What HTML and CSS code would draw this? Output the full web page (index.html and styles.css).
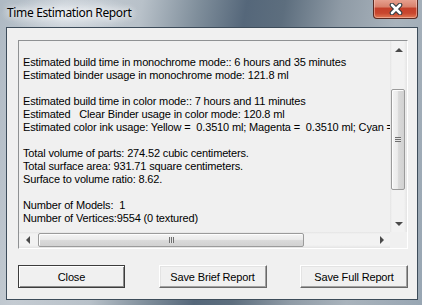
FILE: index.html
```html
<!DOCTYPE html>
<html>
<head>
<meta charset="utf-8">
<link rel="stylesheet" href="styles.css">
</head>
<body>
<div class="window">
  <div class="titlebar">
    <span class="title">Time Estimation Report</span>
    <button class="close-btn" aria-label="Close">
      <svg width="14" height="12" viewBox="0 0 14 12">
        <path d="M3 2 L11 10 M11 2 L3 10" stroke="#2f3a40" stroke-width="4.6" stroke-linecap="round" fill="none"/>
        <path d="M3 2 L11 10 M11 2 L3 10" stroke="#ffffff" stroke-width="2.6" stroke-linecap="round" fill="none"/>
      </svg>
    </button>
  </div>
  <div class="client">
    <div class="report">
      <div class="report-text">
        <div class="line"> </div>
        <div class="line">Estimated build time in monochrome mode:: 6 hours and 35 minutes</div>
        <div class="line">Estimated binder usage in monochrome mode: 121.8 ml</div>
        <div class="line"> </div>
        <div class="line">Estimated build time in color mode:: 7 hours and 11 minutes</div>
        <div class="line">Estimated   Clear Binder usage in color mode: 120.8 ml</div>
        <div class="line">Estimated color ink usage: Yellow =  0.3510 ml; Magenta =  0.3510 ml; Cyan =  0.3510 ml; Black =  0.3510 ml</div>
        <div class="line"> </div>
        <div class="line">Total volume of parts: 274.52 cubic centimeters.</div>
        <div class="line">Total surface area: 931.71 square centimeters.</div>
        <div class="line">Surface to volume ratio: 8.62.</div>
        <div class="line"> </div>
        <div class="line">Number of Models:  1</div>
        <div class="line">Number of Vertices:9554 (0 textured)</div>
      </div>
      <div class="vscroll">
        <div class="sb-btn"><span class="arr arr-up"></span></div>
        <div class="vtrack">
          <div class="vthumb"><span class="grip-v"></span></div>
        </div>
        <div class="sb-btn"><span class="arr arr-down"></span></div>
      </div>
      <div class="hscroll">
        <div class="sb-btn-h"><span class="arr arr-left"></span></div>
        <div class="htrack">
          <div class="hthumb"><span class="grip-h"></span></div>
        </div>
        <div class="sb-btn-h"><span class="arr arr-right"></span></div>
      </div>
      <div class="corner"></div>
    </div>
    <div class="buttons">
      <button class="btn btn-default">Close</button>
      <button class="btn btn-wide">Save Brief Report</button>
      <button class="btn btn-wide">Save Full Report</button>
    </div>
  </div>
</div>
</body>
</html>
```
FILE: styles.css
```css
html, body {
  margin: 0;
  padding: 0;
}
body {
  width: 422px;
  height: 305px;
  overflow: hidden;
  background:
    radial-gradient(ellipse 70px 18px at 70px 14px, rgba(235,240,245,0.85), rgba(235,240,245,0) 100%),
    linear-gradient(100deg, #aeb9c3 0%, #c4cbd2 14%, #b8c1c9 30%, #7f8e9b 42%, #55677a 52%, #5d6e7e 60%, #8f9ba6 72%, #a9b3bc 84%, #98a6b3 100%);
  font-family: "Liberation Sans", Arial, sans-serif;
}
.window {
  display: flex;
  flex-direction: column;
  height: 305px;
}
.titlebar {
  height: 27px;
  display: flex;
  align-items: flex-start;
  padding: 0 4px 0 7px;
  box-sizing: border-box;
}
.title {
  margin-top: 5px;
  font-family: "Noto Sans", "Open Sans", sans-serif;
  font-size: 12px;
  letter-spacing: -0.35px;
  line-height: 16px;
  color: #000;
  text-shadow: 0 0 6px rgba(255,255,255,0.9), 0 0 10px rgba(255,255,255,0.8);
}
.close-btn {
  margin-left: auto;
  margin-top: -1px;
  width: 45px;
  height: 20px;
  padding: 0;
  border: 1px solid #5a2a22;
  border-top: none;
  border-radius: 0 0 4px 4px;
  background: linear-gradient(to bottom, #e8a493 0%, #d9826d 40%, #c4402a 50%, #c9472f 75%, #e07a55 100%);
  box-shadow: inset 0 0 0 1px rgba(255,220,210,0.45);
  display: flex;
  align-items: center;
  justify-content: center;
}
.close-btn svg {
  display: block;
}
.client {
  flex: 1;
  margin: 0 4px 5px 6px;
  border: 1px solid #3d4c5a;
  background: #f0f0f0;
  padding: 12px 9px 11px 11px;
  display: flex;
  flex-direction: column;
  gap: 16px;
}
.report {
  height: 209px;
  box-sizing: border-box;
  border: 1px solid;
  border-color: #8f9193 #ffffff #ffffff #8f9193;
  display: grid;
  grid-template-columns: 371px 17px;
  grid-template-rows: 191px 16px;
  background: #f0f0f0;
}
.report-text {
  overflow: hidden;
  padding: 2px 0 0 4px;
  font-size: 11px;
  line-height: 13px;
  letter-spacing: -0.15px;
  color: #000;
}
.line {
  height: 13px;
  white-space: pre;
}
.vscroll {
  display: flex;
  flex-direction: column;
  background: linear-gradient(to right, #e4e4e4 0, #f2f2f2 2px, #f2f2f2 14px, #e4e4e4 17px);
}
.sb-btn {
  height: 17px;
  display: flex;
  align-items: center;
  justify-content: center;
}
.sb-btn-h {
  width: 17px;
  display: flex;
  align-items: center;
  justify-content: center;
}
.vtrack {
  flex: 1;
  padding-top: 31px;
  padding-left: 1px;
}
.vthumb {
  width: 14px;
  height: 101px;
  box-sizing: border-box;
  border: 1px solid #9b9b9b;
  border-radius: 2px;
  background: linear-gradient(to right, #f4f4f4 0%, #ebebeb 45%, #d9d9d9 55%, #d2d2d2 100%);
  box-shadow: inset 1px 1px 0 #fdfdfd;
  display: flex;
  align-items: center;
  justify-content: center;
}
.grip-v {
  width: 6px;
  height: 5px;
  background: repeating-linear-gradient(to bottom, #6f6f6f 0, #6f6f6f 1px, #e6e6e6 1px, #e6e6e6 2px);
}
.hscroll {
  display: flex;
  background: linear-gradient(to bottom, #e4e4e4 0, #f2f2f2 2px, #f2f2f2 13px, #e4e4e4 16px);
}
.htrack {
  flex: 1;
  padding-left: 2px;
  padding-top: 1px;
}
.hthumb {
  width: 266px;
  height: 14px;
  box-sizing: border-box;
  border: 1px solid #9b9b9b;
  border-radius: 2px;
  background: linear-gradient(to bottom, #f4f4f4 0%, #ebebeb 45%, #d9d9d9 55%, #d2d2d2 100%);
  box-shadow: inset 1px 1px 0 #fdfdfd;
  display: flex;
  align-items: center;
  justify-content: center;
}
.grip-h {
  width: 5px;
  height: 6px;
  background: repeating-linear-gradient(to right, #6f6f6f 0, #6f6f6f 1px, #e6e6e6 1px, #e6e6e6 2px);
}
.corner {
  background: #f0f0f0;
}
.arr {
  width: 0;
  height: 0;
  display: block;
}
.arr-up {
  border-left: 4px solid transparent;
  border-right: 4px solid transparent;
  border-bottom: 4px solid #4a4a4a;
}
.arr-down {
  border-left: 4px solid transparent;
  border-right: 4px solid transparent;
  border-top: 4px solid #4a4a4a;
}
.arr-left {
  border-top: 4px solid transparent;
  border-bottom: 4px solid transparent;
  border-right: 4px solid #4a4a4a;
}
.arr-right {
  border-top: 4px solid transparent;
  border-bottom: 4px solid transparent;
  border-left: 4px solid #4a4a4a;
}
.buttons {
  display: flex;
  justify-content: space-between;
}
.btn {
  height: 23px;
  width: 108px;
  padding: 0;
  font-family: "Liberation Sans", Arial, sans-serif;
  font-size: 11px;
  letter-spacing: -0.15px;
  color: #000;
  background: #f0f0f0;
  border: 1px solid;
  border-color: #ffffff #696969 #696969 #ffffff;
  box-shadow: inset -1px -1px 0 #a0a0a0, inset 1px 1px 0 #e3e3e3;
}
.btn-default {
  width: 107px;
  border-color: #3c3c3c;
  box-shadow: inset 1px 1px 0 #ffffff, inset -1px -1px 0 #8a8a8a;
}
```
